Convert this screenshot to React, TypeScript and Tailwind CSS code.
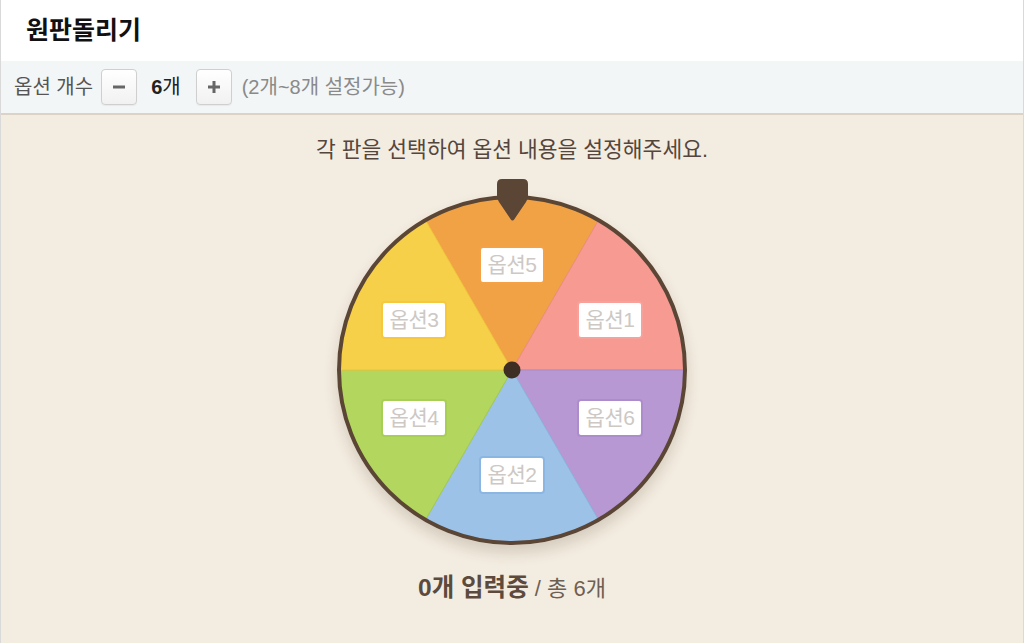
import React from "react";

const FONT = { fontFamily: '"Liberation Sans", "Noto Sans CJK KR", sans-serif' };

// clockwise from top, each 60deg
const segments = [
  { label: "옵션5", fill: "#f0a245", stroke: "#e8953a", box: "border-[#f4a245]", x: 0, y: -105 },
  { label: "옵션1", fill: "#f69a92", stroke: "#ec8c84", box: "border-[#f7a19a]", x: 98, y: -50 },
  { label: "옵션6", fill: "#b898d2", stroke: "#a98ac6", box: "border-[#ad8ccb]", x: 98, y: 48 },
  { label: "옵션2", fill: "#9cc2e8", stroke: "#8bb4de", box: "border-[#8cb6e2]", x: 0, y: 105 },
  { label: "옵션4", fill: "#b2d65e", stroke: "#a3c951", box: "border-[#a8cf55]", x: -98, y: 48 },
  { label: "옵션3", fill: "#f7d04a", stroke: "#efc33c", box: "border-[#f5c83e]", x: -98, y: -50 },
];

function slicePath(i: number, r: number, c: number) {
  const a1 = ((-30 + i * 60) * Math.PI) / 180;
  const a2 = ((30 + i * 60) * Math.PI) / 180;
  const x1 = c + r * Math.sin(a1);
  const y1 = c - r * Math.cos(a1);
  const x2 = c + r * Math.sin(a2);
  const y2 = c - r * Math.cos(a2);
  return `M${c},${c} L${x1},${y1} A${r},${r} 0 0 1 ${x2},${y2} Z`;
}

function Wheel() {
  const size = 350;
  const c = size / 2;
  return (
    <div className="relative w-[350px] h-[350px] rounded-full shadow-[0_8px_14px_rgba(80,60,40,0.18)]">
      <svg width={size} height={size} viewBox={`0 0 ${size} ${size}`} className="block">
        {segments.map((s, i) => (
          <path key={s.label} d={slicePath(i, 172, c)} fill={s.fill} stroke={s.stroke} strokeWidth={1} />
        ))}
        <circle cx={c} cy={c} r={173} fill="none" stroke="#5b4636" strokeWidth={4} />
        <circle cx={c} cy={c} r={8.5} fill="#3e2d22" />
      </svg>

      {segments.map((s) => (
        <div
          key={s.label}
          className={`absolute w-[66px] h-[38px] -ml-[33px] -mt-[19px] rounded-[4px] border-2 ${s.box} bg-white flex items-center justify-center text-[21px] tracking-[-0.5px] text-[#cdc8c4]`}
          style={{ left: c + s.x, top: c + s.y }}
        >
          {s.label}
        </div>
      ))}

      <svg
        width="31"
        height="43"
        viewBox="0 0 31 43"
        className="absolute left-[159.5px] -top-[16px]"
      >
        <path
          d="M5,0 H26 Q31,0 31,5 V17 Q31,20 29,23 L17.5,40 Q15.5,43 13.5,40 L2,23 Q0,20 0,17 V5 Q0,0 5,0 Z"
          fill="#5b4636"
        />
      </svg>
    </div>
  );
}

function StepButton({ children }: { children: React.ReactNode }) {
  return (
    <button className="w-[36px] h-[36px] rounded-[4px] border border-[#cfcfcf] bg-gradient-to-b from-white to-[#f1f1f1] flex items-center justify-center text-[#666] shadow-[0_1px_1px_rgba(0,0,0,0.05)]">
      {children}
    </button>
  );
}

export default function App() {
  return (
    <div style={FONT} className="w-[1024px] h-[643px] overflow-hidden border-x border-[#d9d9d9] bg-[#f3ece0] flex flex-col">
      <header className="h-[61px] bg-white flex items-center pl-[25px] shrink-0">
        <h1 className="text-[25px] font-bold text-[#111]">원판돌리기</h1>
      </header>

      <div className="h-[54px] bg-[#f3f6f7] border-b-2 border-[#dcd3c6] flex items-center pl-[13px] shrink-0 text-[20px]">
        <span className="text-[#555]">옵션 개수</span>
        <div className="ml-[8px]">
          <StepButton>
            <svg width="14" height="14" viewBox="0 0 14 14">
              <rect x="1" y="5.5" width="12" height="3" fill="#666" />
            </svg>
          </StepButton>
        </div>
        <span className="ml-[14px] text-[#222]">
          <b className="font-bold">6</b>개
        </span>
        <div className="ml-[15px]">
          <StepButton>
            <svg width="14" height="14" viewBox="0 0 14 14">
              <rect x="1" y="5.5" width="12" height="3" fill="#666" />
              <rect x="5.5" y="1" width="3" height="12" fill="#666" />
            </svg>
          </StepButton>
        </div>
        <span className="ml-[10px] text-[#8a8a8a]">(2개~8개 설정가능)</span>
      </div>

      <main className="flex-1 flex flex-col items-center pt-[20px]">
        <p className="text-[21.5px] leading-[30px] text-[#54463c]">각 판을 선택하여 옵션 내용을 설정해주세요.</p>
        <div className="mt-[30px]">
          <Wheel />
        </div>
        <p className="mt-[27px] leading-[32px] text-[#6e5f53]">
          <b className="text-[24.5px] font-bold text-[#5c4a3d]">0개 입력중</b>
          <span className="text-[22px]"> / 총 6개</span>
        </p>
      </main>
    </div>
  );
}
